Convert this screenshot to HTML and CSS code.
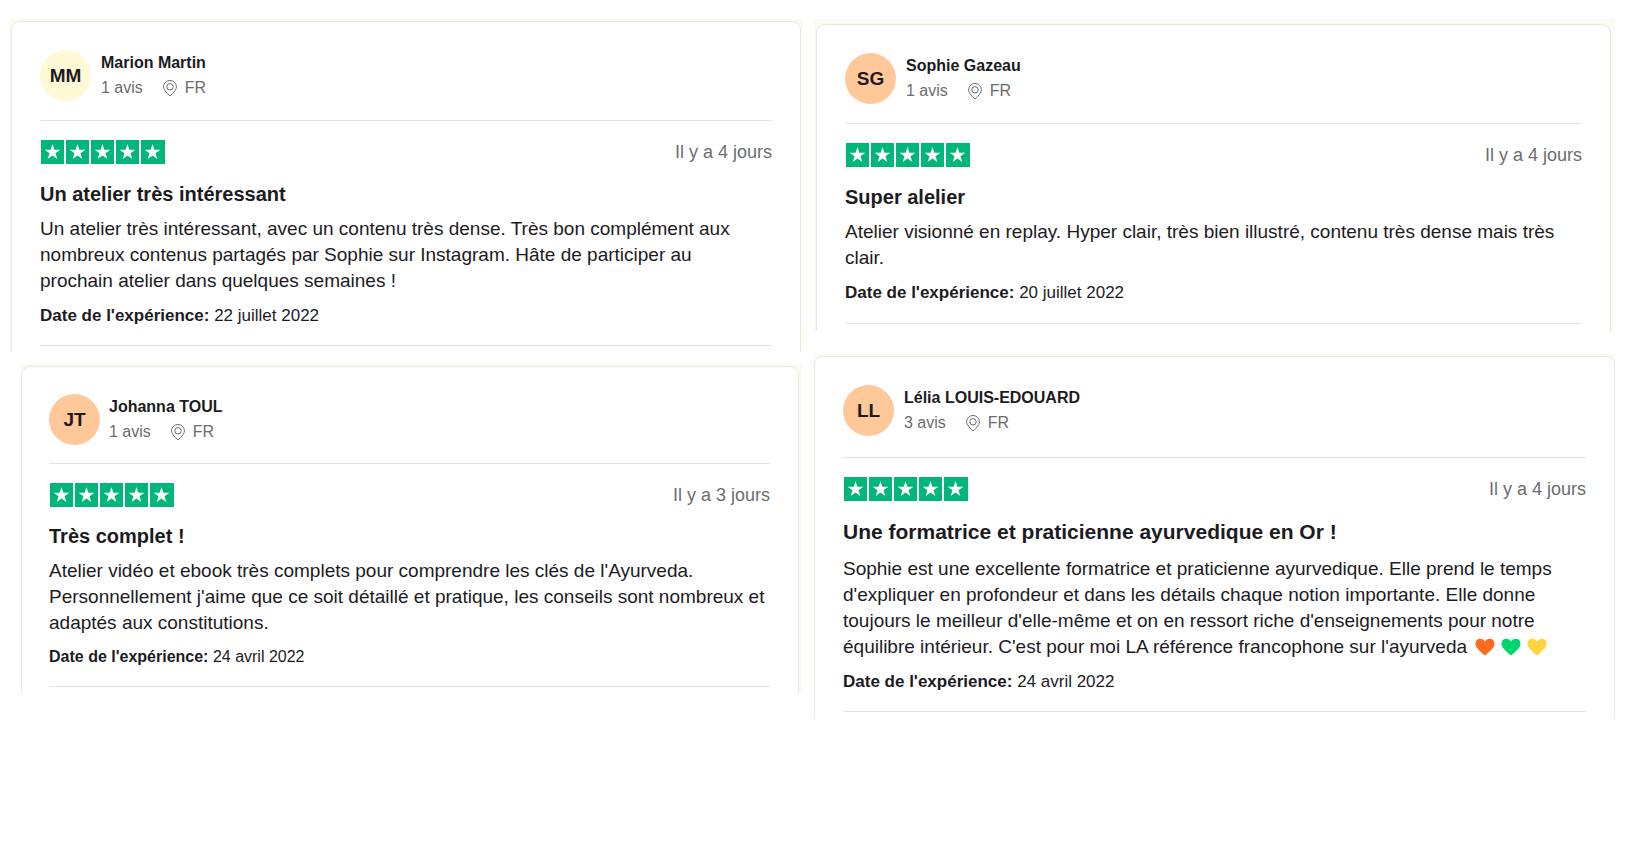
FILE: index.html
```html
<!DOCTYPE html>
<html lang="fr">
<head>
  <meta charset="UTF-8">
  <meta name="viewport" content="width=device-width, initial-scale=1.0">
  <title>Avis clients</title>
  <link rel="stylesheet" href="styles.css">
</head>
<body>
  <!-- Shared icons -->
  <svg class="sprite" aria-hidden="true">
    <symbol id="stars" viewBox="0 0 126 24">
      <path fill="#00b67a" d="M1 0h23v24H1zM26 0h23v24H26zM51 0h23v24H51zM76 0h23v24H76zM101 0h24v24h-24z"/>
      <g fill="#fff">
        <path id="star" d="M12.500 4l1.850 5.700h6l-4.850 3.500 1.850 5.700-4.850-3.500-4.850 3.500 1.850-5.700-4.850-3.500h6z"/>
        <use href="#star" x="25"/>
        <use href="#star" x="50"/>
        <use href="#star" x="75"/>
        <use href="#star" x="100"/>
      </g>
    </symbol>
    <symbol id="pin" viewBox="0 0 14 17">
      <g fill="none" stroke="#6c6c70" stroke-width="1">
        <path d="M7 16C5 14 .6 10.500.6 6.700a6.400 6.200 0 0 1 12.800 0C13.400 10.500 9 14 7 16z"/>
        <circle cx="7" cy="6.800" r="3.200"/>
      </g>
    </symbol>
    <symbol id="heart" viewBox="0 0 20 18">
      <path fill="currentColor" d="M10 17.500C7 14.500.5 10.600.5 5.700.5 2.800 2.600.8 5.200.8 7.300.8 9.200 2 10 3.800 10.800 2 12.700.8 14.800.8c2.600 0 4.700 2 4.700 4.900 0 4.900-6.500 8.800-9.500 11.800z"/>
    </symbol>
  </svg>

  <main class="reviews">
    <!-- Left column -->
    <div class="column column-left">
      <article class="review review-marion">
        <div class="card">
          <header class="author">
            <div class="avatar avatar-yellow">MM</div>
            <div>
              <div class="name">Marion Martin</div>
              <div class="meta"><span>1 avis</span><svg class="pin"><use href="#pin"/></svg><span>FR</span></div>
            </div>
          </header>
          <div class="rating">
            <svg class="stars" role="img" aria-label="5 sur 5"><use href="#stars"/></svg>
            <time>Il y a 4 jours</time>
          </div>
          <h2>Un atelier très intéressant</h2>
          <p class="text">Un atelier très intéressant, avec un contenu très dense. Très bon complément aux<br>
            nombreux contenus partagés par Sophie sur Instagram. Hâte de participer au<br>
            prochain atelier dans quelques semaines !</p>
          <p class="experience"><b>Date de l'expérience:</b> 22 juillet 2022</p>
        </div>
      </article>

      <article class="review review-johanna">
        <div class="card">
          <header class="author">
            <div class="avatar">JT</div>
            <div>
              <div class="name">Johanna TOUL</div>
              <div class="meta"><span>1 avis</span><svg class="pin"><use href="#pin"/></svg><span>FR</span></div>
            </div>
          </header>
          <div class="rating">
            <svg class="stars" role="img" aria-label="5 sur 5"><use href="#stars"/></svg>
            <time>Il y a 3 jours</time>
          </div>
          <h2>Très complet !</h2>
          <p class="text">Atelier vidéo et ebook très complets pour comprendre les clés de l'Ayurveda.<br>
            Personnellement j'aime que ce soit détaillé et pratique, les conseils sont nombreux et<br>
            adaptés aux constitutions.</p>
          <p class="experience"><b>Date de l'expérience:</b> 24 avril 2022</p>
        </div>
      </article>
    </div>

    <!-- Right column -->
    <div class="column column-right">
      <article class="review review-sophie">
        <div class="card">
          <header class="author">
            <div class="avatar">SG</div>
            <div>
              <div class="name">Sophie Gazeau</div>
              <div class="meta"><span>1 avis</span><svg class="pin"><use href="#pin"/></svg><span>FR</span></div>
            </div>
          </header>
          <div class="rating">
            <svg class="stars" role="img" aria-label="5 sur 5"><use href="#stars"/></svg>
            <time>Il y a 4 jours</time>
          </div>
          <h2>Super alelier</h2>
          <p class="text">Atelier visionné en replay. Hyper clair, très bien illustré, contenu très dense mais très<br>
            clair.</p>
          <p class="experience"><b>Date de l'expérience:</b> 20 juillet 2022</p>
        </div>
      </article>

      <article class="review review-lelia">
        <div class="card">
          <header class="author">
            <div class="avatar">LL</div>
            <div>
              <div class="name">Lélia LOUIS-EDOUARD</div>
              <div class="meta"><span>3 avis</span><svg class="pin"><use href="#pin"/></svg><span>FR</span></div>
            </div>
          </header>
          <div class="rating">
            <svg class="stars" role="img" aria-label="5 sur 5"><use href="#stars"/></svg>
            <time>Il y a 4 jours</time>
          </div>
          <h2>Une formatrice et praticienne ayurvedique en Or !</h2>
          <p class="text">Sophie est une excellente formatrice et praticienne ayurvedique. Elle prend le temps<br>
            d'expliquer en profondeur et dans les détails chaque notion importante. Elle donne<br>
            toujours le meilleur d'elle-même et on en ressort riche d'enseignements pour notre<br>
            équilibre intérieur. C'est pour moi LA référence francophone sur l'ayurveda
            <span class="hearts"><svg class="heart orange"><use href="#heart"/></svg><svg class="heart green"><use href="#heart"/></svg><svg class="heart yellow"><use href="#heart"/></svg></span></p>
          <p class="experience"><b>Date de l'expérience:</b> 24 avril 2022</p>
        </div>
      </article>
    </div>
  </main>
</body>
</html>
```
FILE: styles.css
```css
:root {
  --ink: #1c1b1f;
  --muted: #6c6c70;
  --line: #e4e4e4;
  --card-line: #e8e8df;
  --cream: #fbfbf3;
  --peach: #ffc899;
}
* {
  box-sizing: border-box;
}
body {
  margin: 0;
  background: #fff;
  color: var(--ink);
  font-family: "Liberation Sans", Arial, sans-serif;
  font-size: 16px;
}
.sprite {
  position: absolute;
  width: 0;
  height: 0;
}
/* Two columns of reviews */
.reviews {
  display: grid;
  grid-template-columns: 793fr 801fr;
  gap: 11px;
  padding: 19px 19px 0 10px;
}
.column {
  display: flex;
  flex-direction: column;
  gap: 12px;
  min-width: 0;
}
.column-right {
  gap: 23px;
}
/* Review card, open at the bottom */
.review {
  background: var(--cream);
  padding-top: 2px;
}
.card {
  background: #fff;
  border: 1px solid var(--card-line);
  border-bottom: 0;
  border-radius: 9px 9px 0 0;
  padding: 28px 28px 6px;
}
.review-marion {
  padding-right: 2px;
  padding-left: 1px;
}
.review-johanna {
  margin-left: 11px;
  margin-right: 1px;
  padding-right: 3px;
}
.review-johanna .card {
  padding: 27px 28px 6px 27px;
}
.review-sophie {
  padding: 5px 4px 0 2px;
}
/* Author */
.author {
  display: flex;
  align-items: center;
  gap: 10px;
  padding-bottom: 19px;
  border-bottom: 1px solid var(--line);
}
.avatar {
  width: 51px;
  height: 51px;
  border-radius: 50%;
  background: var(--peach);
  font-size: 19px;
  font-weight: 700;
  line-height: 52px;
  text-align: center;
}
.avatar-yellow {
  background: #fff9d6;
}
.name {
  font-weight: 700;
  line-height: 25px;
}
.meta {
  display: flex;
  align-items: center;
  color: var(--muted);
  line-height: 26px;
}
.pin {
  width: 14px;
  height: 17px;
  margin: 0 8px 0 20px;
}
/* Rating */
.rating {
  display: flex;
  align-items: center;
  justify-content: space-between;
  margin-top: 19px;
}
.stars {
  width: 126px;
  height: 24px;
}
time {
  color: var(--muted);
  font-size: 18px;
  line-height: 24px;
}
/* Content */
h2 {
  margin: 16px 0 0;
  font-size: 20px;
  line-height: 28px;
}
.text {
  margin: 8px 0 0;
  font-size: 19px;
  line-height: 26px;
  white-space: nowrap;
}
.experience {
  margin: 9px 0 0;
  padding-bottom: 16px;
  border-bottom: 1px solid var(--line);
  font-size: 17px;
  line-height: 26px;
}
/* Spacing variants */
.review-johanna .author {
  gap: 9px;
  padding-bottom: 18px;
}
.review-johanna h2 {
  margin-top: 15px;
}
.review-johanna .experience {
  margin-top: 8px;
  font-size: 16px;
}
.review-sophie .experience {
  padding-bottom: 17px;
}
.review-sophie .card {
  padding-bottom: 7px;
}
.review-lelia .author {
  padding-bottom: 21px;
}
.review-lelia h2 {
  margin-top: 17px;
  font-size: 21px;
}
.review-lelia .text {
  margin-top: 10px;
}
.hearts {
  display: inline-flex;
  gap: 6px;
  margin-left: 3px;
  vertical-align: -3px;
}
.heart {
  width: 20px;
  height: 18px;
}
.orange {
  color: #ff6a22;
}
.green {
  color: #00d56f;
}
.yellow {
  color: #ffd43f;
}
@media (max-width: 1500px) {
  .text {
    white-space: normal;
  }
  .text br {
    display: none;
  }
}
@media (max-width: 900px) {
  .reviews {
    grid-template-columns: 1fr;
  }
}
```
